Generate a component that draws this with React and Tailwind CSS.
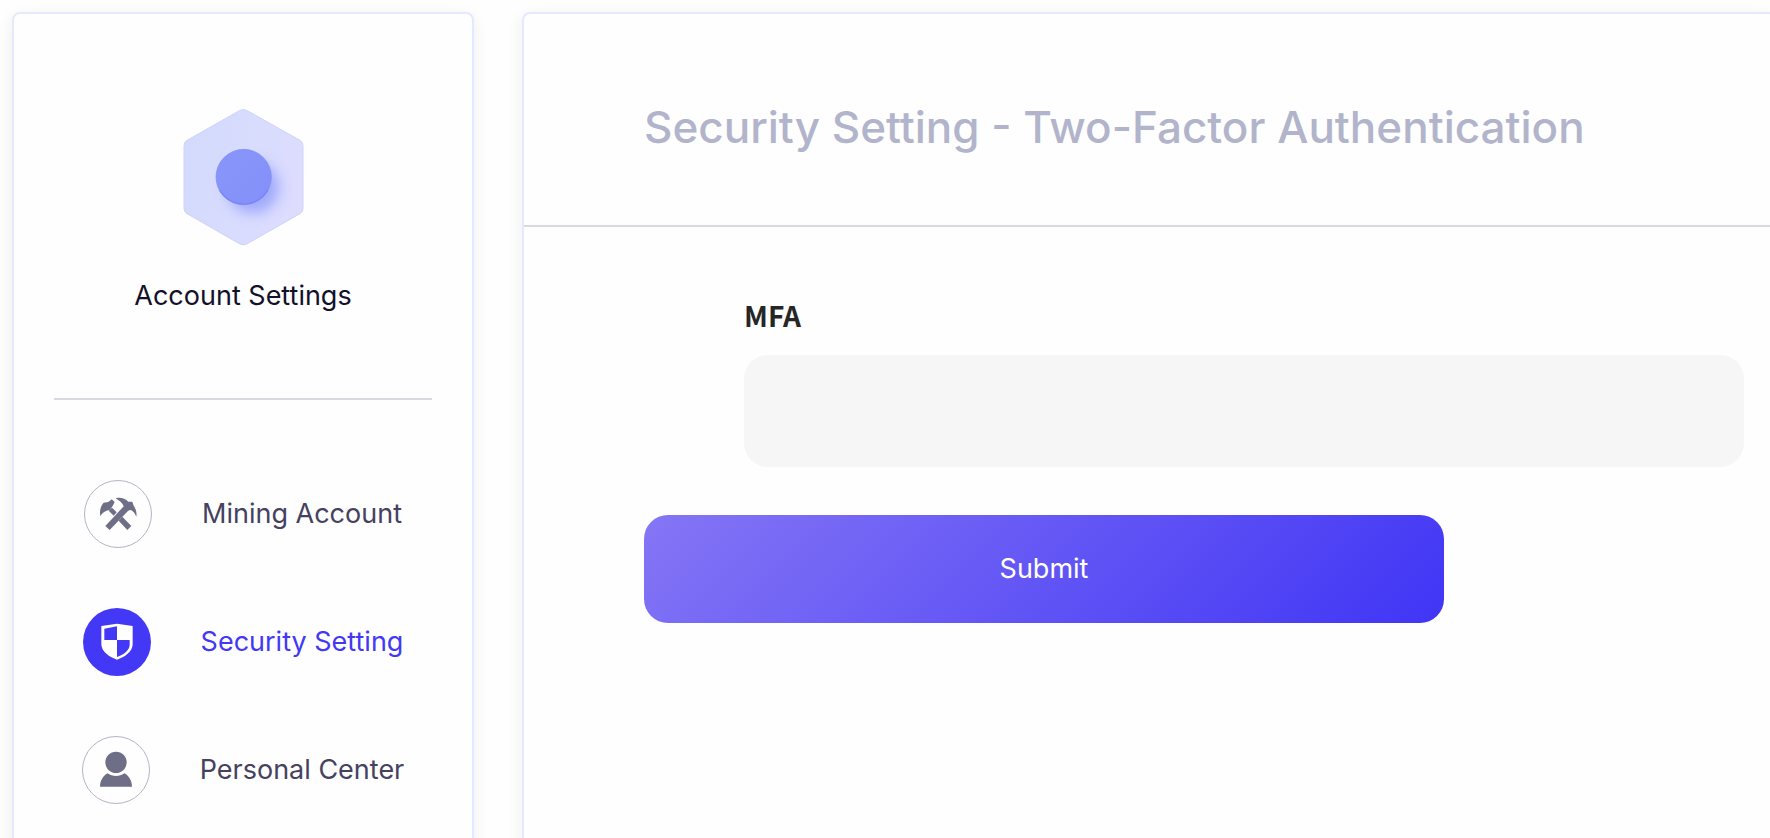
const panel = "border-[#e6e8ff] bg-[#fefefe] shadow-[0_4px_16px_rgba(0,0,0,0.07)]";

function HexagonMark() {
  return (
    <svg viewBox="67 58 363 411" className="h-[137px] w-[121px]" aria-hidden="true">
      <defs>
        <linearGradient id="hex" x1="0" y1="0.3" x2="1" y2="0.6">
          <stop offset="0" stopColor="#d3dafc" />
          <stop offset="0.5" stopColor="#d8dcfd" />
          <stop offset="1" stopColor="#dddcff" />
        </linearGradient>
        <linearGradient id="dot" x1="0" y1="0" x2="1" y2="1">
          <stop offset="0" stopColor="#8896fa" />
          <stop offset="1" stopColor="#8490f8" />
        </linearGradient>
        <filter id="glow" x="-50%" y="-50%" width="200%" height="200%">
          <feGaussianBlur stdDeviation="20" />
        </filter>
      </defs>
      <path
        d="M236 63Q248 56 260 63L418 152Q427 157 427 168V356Q427 367 418 372L260 462Q248 469 236 462L79 372Q70 367 70 356V168Q70 157 79 152Z"
        fill="url(#hex)"
        stroke="#ced3fd"
        strokeWidth="3"
      />
      <circle cx="277" cy="293" r="78" fill="#8f9cfb" opacity="0.8" filter="url(#glow)" />
      <circle cx="249" cy="262" r="83" fill="url(#dot)" stroke="#7f8bf5" strokeWidth="2" />
      <path d="M176 300A83 83 0 0 0 322 300" fill="none" stroke="#7480f2" strokeWidth="4" opacity="0.7" />
    </svg>
  );
}

function MiningIcon() {
  return (
    <svg viewBox="0 0 204 204" className="size-full" fill="#6e6e87" aria-hidden="true">
      <path d="M49 109C46 91 50 78 59 68L73 66L83 58L92 66L86 78L78 89L68 92C59 96 53 101 49 109Z" />
      <path d="M84 83L98 97L89 107L74 92Z" />
      <path d="M115 110L142 138L130 150L104 122Z" />
      <path d="M64 138L120 78L134 91L77 150Z" />
      <path d="M95 55C110 51 123 56 133 65H145L149 77C155 86 159 96 157 110C153 100 148 94 141 90L130 92L120 80C115 69 106 61 95 55Z" />
    </svg>
  );
}

function ShieldIcon() {
  return (
    <svg viewBox="0 0 204 204" className="size-full" aria-hidden="true">
      <path d="M102 47L149 54V108C149 132 124 147 102 155C80 147 55 132 55 108V54Z" fill="#fff" />
      <path d="M102 55V96H64V62Z" fill="#4338f5" />
      <path d="M102 96H140V110C140 127 121 140 102 147Z" fill="#4338f5" />
    </svg>
  );
}

function PersonIcon() {
  return (
    <svg viewBox="0 0 204 204" className="size-full" fill="#6e6e87" aria-hidden="true">
      <circle cx="102" cy="79" r="32" />
      <path d="M54 152C54 134 63 120 77 112C92 123 112 123 127 112C141 120 150 134 150 152Z" />
    </svg>
  );
}

const items = [
  { label: "Mining Account", Icon: MiningIcon },
  { label: "Security Setting", Icon: ShieldIcon, active: true },
  { label: "Personal Center", Icon: PersonIcon },
];

export default function App() {
  return (
    <div className="flex min-h-screen gap-12 overflow-hidden bg-[#fefefe] pt-3 pl-3 font-['Inter',sans-serif]">
      <aside className={`-mb-4 w-[462px] shrink-0 rounded-lg border-2 px-10 ${panel}`}>
        <div className="flex flex-col items-center border-b-2 border-[#d9d9e1] pt-[95px] pb-[82px]">
          <HexagonMark />
          <h2 className="mt-[30px] text-[27px] leading-10 text-[#13102b]">Account Settings</h2>
        </div>
        <nav className="flex flex-col gap-[60px] pt-20">
          {items.map(({ label, Icon, active }) => (
            <a
              key={label}
              href="#"
              aria-current={active ? "page" : undefined}
              className={`flex items-center justify-center gap-[50px] text-[27px] whitespace-nowrap ${active ? "text-[#4338f5]" : "text-[#45425f]"}`}
            >
              <span className={`size-[68px] shrink-0 rounded-full ${active ? "bg-[#4338f5]" : "outline-1 -outline-offset-1 outline-[#b5b4c4]"}`}>
                <Icon />
              </span>
              {label}
            </a>
          ))}
        </nav>
      </aside>

      <main className={`-mb-4 min-w-0 flex-1 rounded-l-lg border-2 border-r-0 ${panel}`}>
        <header className="border-b-2 border-[#d9d9e1] px-[120px] pt-[83px] pb-[68px]">
          <h1 className="text-[44px] leading-[60px] font-medium whitespace-nowrap text-[#b2b4cb]">
            Security Setting - Two-Factor Authentication
          </h1>
        </header>
        <form className="pt-[68px] pr-[26px] pl-[120px]" onSubmit={(e) => e.preventDefault()}>
          <div className="pl-[100px]">
            <label htmlFor="mfa" className="block font-['Noto_Sans_CJK_SC',sans-serif] text-[28px] leading-10 font-bold text-[#262626]">
              MFA
            </label>
            <input id="mfa" type="text" className="mt-5 h-28 w-full max-w-[1000px] rounded-3xl bg-[#f6f6f6] px-8 text-[28px] outline-none" />
          </div>
          <button type="submit" className="mt-12 h-[108px] w-full max-w-[800px] rounded-3xl bg-[linear-gradient(135deg,#8576f5,#4035f5)] text-[27px] text-white">
            Submit
          </button>
        </form>
      </main>
    </div>
  );
}
